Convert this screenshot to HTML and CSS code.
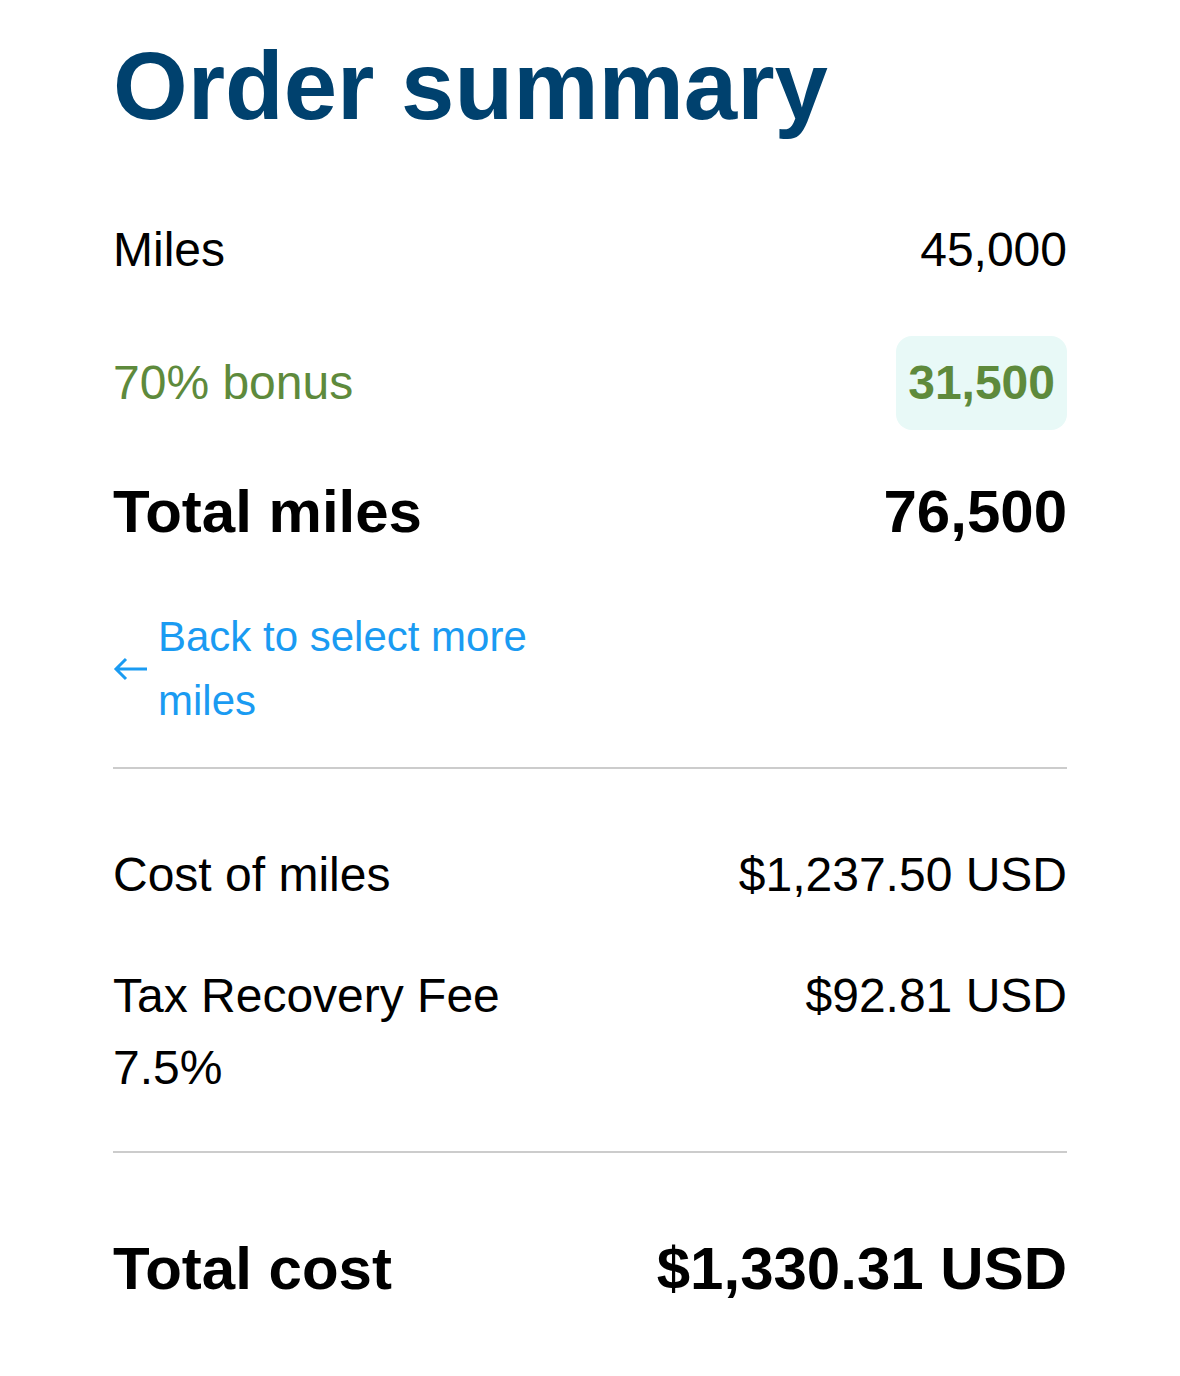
FILE: index.html
```html
<!DOCTYPE html>
<html lang="en">
<head>
    <meta charset="UTF-8">
    <meta name="viewport" content="width=device-width, initial-scale=1.0">
    <title>Order summary</title>
    <link rel="stylesheet" href="styles.css">
</head>
<body>

    <div class="summary">
        <h1 class="summary-title">Order summary</h1>

        <div class="row row-miles">
            <span>Miles</span>
            <span>45,000</span>
        </div>

        <div class="row row-bonus">
            <span>70% bonus</span>
            <span class="bonus-badge">31,500</span>
        </div>

        <div class="row row-total">
            <span>Total miles</span>
            <span>76,500</span>
        </div>

        <a class="back-link" href="#">
            <svg class="back-arrow" width="34" height="24" viewBox="0 0 34 24" fill="none" stroke="currentColor" stroke-width="3">
                <path d="M34 12H3M13 2L3 12L13 22"/>
            </svg>
            <span class="back-text">Back to select more miles</span>
        </a>

        <hr class="divider divider-first">

        <div class="row row-cost">
            <span>Cost of miles</span>
            <span>$1,237.50 USD</span>
        </div>

        <div class="row row-tax">
            <span class="tax-label">Tax Recovery Fee<br>7.5%</span>
            <span>$92.81 USD</span>
        </div>

        <hr class="divider divider-second">

        <div class="row row-total row-grand">
            <span>Total cost</span>
            <span>$1,330.31 USD</span>
        </div>
    </div>

</body>
</html>
```

FILE: styles.css
```css
body {
    margin: 0;
    padding: 0;
    background: #fff;
    font-family: "Liberation Sans", Arial, sans-serif;
    color: #000;
}

.summary {
    width: 954px;
    margin: 0 auto;
    padding-top: 28px;
}

.summary-title {
    margin: 0;
    font-size: 96px;
    line-height: 115px;
    font-weight: bold;
    color: #00416e;
}

.row {
    display: flex;
    justify-content: space-between;
    align-items: center;
    font-size: 48px;
    line-height: 72px;
}

.row-tax {
    align-items: flex-start;
}

.row-miles {
    margin-top: 71px;
}

.row-bonus {
    margin-top: 50px;
    color: #5e8a3c;
}

.bonus-badge {
    font-weight: bold;
    background-color: #e8f9f7;
    border-radius: 16px;
    padding: 11px 12px;
}

.row-total {
    margin-top: 37px;
    font-size: 60px;
    line-height: 90px;
    font-weight: bold;
}

.back-link {
    display: flex;
    align-items: center;
    width: 477px;
    margin-top: 48px;
    color: #1a9bf2;
    text-decoration: none;
    font-size: 42px;
    line-height: 64px;
}

.back-arrow {
    flex-shrink: 0;
    margin-right: 11px;
}

.divider {
    border: 0;
    height: 2px;
    background-color: #cccccc;
    margin: 0;
}

.divider-first {
    margin-top: 34px;
}

.row-cost {
    margin-top: 70px;
}

.row-tax {
    margin-top: 49px;
}

.divider-second {
    margin-top: 47px;
}

.row-grand {
    margin-top: 71px;
}
```
